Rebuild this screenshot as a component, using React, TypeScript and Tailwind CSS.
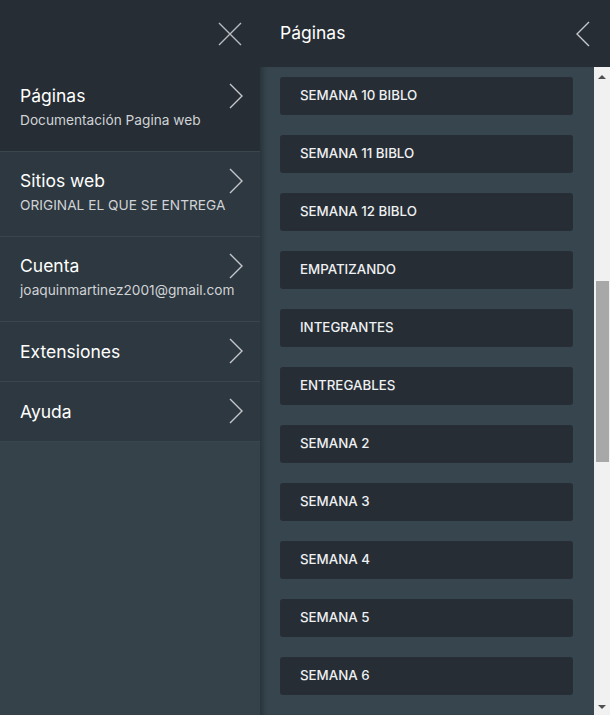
const menuItems = [
  { title: "Páginas", subtitle: "Documentación Pagina web", active: true },
  { title: "Sitios web", subtitle: "ORIGINAL EL QUE SE ENTREGA" },
  { title: "Cuenta", subtitle: "joaquinmartinez2001@gmail.com" },
  { title: "Extensiones" },
  { title: "Ayuda" },
]

const pages = [
  "SEMANA 10 BIBLO",
  "SEMANA 11 BIBLO",
  "SEMANA 12 BIBLO",
  "EMPATIZANDO",
  "INTEGRANTES",
  "ENTREGABLES",
  "SEMANA 2",
  "SEMANA 3",
  "SEMANA 4",
  "SEMANA 5",
  "SEMANA 6",
]

const Chevron = ({ left }: { left?: boolean }) => (
  <svg width="14" height="26" viewBox="0 0 14 26" fill="none" stroke="#c4c8cc" strokeWidth="1.4">
    {left ? <path d="M13 1 L1 13 L13 25" /> : <path d="M1 1 L13 13 L1 25" />}
  </svg>
)

const App = () => {
  return (
    <div className="flex h-[715px] w-[610px] overflow-hidden bg-[#36424a] font-['Inter','Noto_Sans',sans-serif] text-white">
      <div className="flex w-[260px] shrink-0 flex-col bg-[#36424a]">
        <div className="flex h-[67px] shrink-0 items-center justify-end bg-[#262d34] pr-[18px]">
          <svg width="24" height="24" viewBox="0 0 24 24" stroke="#b8bcc0" strokeWidth="1.4">
            <path d="M1 1 L23 23 M23 1 L1 23" />
          </svg>
        </div>
        {menuItems.map((item) => (
          <div
            key={item.title}
            className={`flex justify-between border-b border-[#3a464e] pl-5 pr-[17px] ${
              item.subtitle ? "h-[85px] items-start pt-[18px]" : "h-[60px] items-center"
            } ${item.active ? "bg-[#262d34]" : "bg-[#2e3840]"}`}
          >
            <div className="flex min-w-0 flex-1 flex-col whitespace-nowrap">
              <span className="text-[17.5px] leading-[22px]">{item.title}</span>
              {item.subtitle && (
                <span className="mt-[5px] text-[13.7px] leading-[16px] text-[#d0d3d6]">{item.subtitle}</span>
              )}
            </div>
            <div className="-mt-[2px] shrink-0">
              <Chevron />
            </div>
          </div>
        ))}
      </div>
      <div className="flex flex-1 flex-col shadow-[inset_6px_0_5px_-3px_rgba(0,0,0,0.25)]">
        <div className="flex h-[67px] shrink-0 items-center justify-between bg-[#262d34] pl-5 pr-[20px]">
          <span className="text-[17.5px]">Páginas</span>
          <Chevron left />
        </div>
        <div className="flex flex-1 overflow-hidden">
          <div className="flex flex-1 flex-col gap-5 overflow-hidden bg-[#36454e] pl-5 pr-[21px] pt-[10px] shadow-[inset_6px_0_5px_-3px_rgba(0,0,0,0.25)]">
            {pages.map((page) => (
              <div
                key={page}
                className="flex h-[38px] shrink-0 items-center rounded-[3px] bg-[#262d34] pl-5 text-[13.3px] font-medium text-[#eef0f2]"
              >
                {page}
              </div>
            ))}
          </div>
          <div className="flex w-4 shrink-0 flex-col items-center bg-[#f1f1f1]">
            <div className="flex h-4 items-center justify-center pt-1">
              <div className="h-0 w-0 border-x-4 border-b-4 border-x-transparent border-b-[#505050]" />
            </div>
            <div className="mt-[198px] h-[181px] w-[13px] bg-[#a8a8a8]" />
            <div className="flex-1" />
            <div className="flex h-4 items-center justify-center">
              <div className="h-0 w-0 border-x-4 border-t-4 border-x-transparent border-t-[#505050]" />
            </div>
          </div>
        </div>
      </div>
    </div>
  )
}

export default App
